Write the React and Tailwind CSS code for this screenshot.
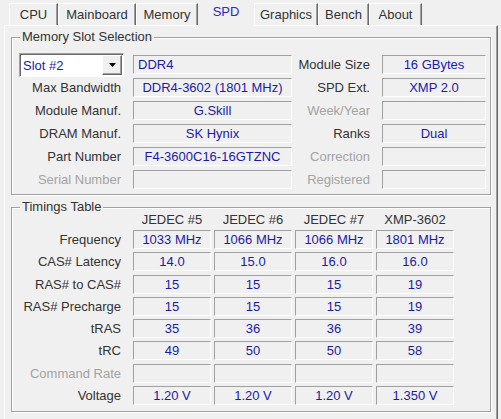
import React from "react";

const tabs = [
  { name: "CPU", w: "w-[49px]" },
  { name: "Mainboard", w: "w-[78px]" },
  { name: "Memory", w: "w-[62px]" },
  { name: "SPD", w: "w-[56px]", active: true },
  { name: "Graphics", w: "w-[64px]" },
  { name: "Bench", w: "w-[51px]" },
  { name: "About", w: "w-[53px]" },
];

const slotRows = [
  { label: "Max Bandwidth", value: "DDR4-3602 (1801 MHz)", right: "SPD Ext.", rightValue: "XMP 2.0" },
  { label: "Module Manuf.", value: "G.Skill", right: "Week/Year", rightOff: true },
  { label: "DRAM Manuf.", value: "SK Hynix", right: "Ranks", rightValue: "Dual" },
  { label: "Part Number", value: "F4-3600C16-16GTZNC", right: "Correction", rightOff: true },
  { label: "Serial Number", off: true, right: "Registered", rightOff: true },
];

const timingCols = ["JEDEC #5", "JEDEC #6", "JEDEC #7", "XMP-3602"];

const timings = [
  { label: "Frequency", values: ["1033 MHz", "1066 MHz", "1066 MHz", "1801 MHz"] },
  { label: "CAS# Latency", values: ["14.0", "15.0", "16.0", "16.0"] },
  { label: "RAS# to CAS#", values: ["15", "15", "15", "19"] },
  { label: "RAS# Precharge", values: ["15", "15", "15", "19"] },
  { label: "tRAS", values: ["35", "36", "36", "39"] },
  { label: "tRC", values: ["49", "50", "50", "58"] },
  { label: "Command Rate", values: ["", "", "", ""], off: true },
  { label: "Voltage", values: ["1.20 V", "1.20 V", "1.20 V", "1.350 V"] },
];

function Field({ children, width, left }) {
  return (
    <div
      className={`flex h-[19px] items-center border border-t-[#a0a0a0] border-l-[#a0a0a0] border-b-white border-r-white leading-none whitespace-nowrap text-[#1b1ba8] ${width} ${
        left ? "justify-start pl-[4px]" : "justify-center"
      }`}
    >
      {children}
    </div>
  );
}

function Label({ children, off, width }) {
  return (
    <div className={`text-right leading-none whitespace-nowrap ${width} ${off ? "text-[#a3a3a3]" : "text-[#333]"}`}>
      {children}
    </div>
  );
}

function GroupBox({ title, className, children }) {
  return (
    <div
      className={`relative ml-[6px] w-[480px] border border-[#a0a0a0] shadow-[inset_1px_1px_0_#fff,1px_1px_0_#fff] ${className}`}
    >
      <span className="absolute -top-[8px] left-[8px] bg-[#f0f0f0] px-[2px] leading-none text-[#333]">{title}</span>
      {children}
    </div>
  );
}

export default function App() {
  return (
    <div className="h-[419px] w-[501px] overflow-hidden bg-[#f0f0f0] font-['Liberation_Sans',Arial,sans-serif] text-[13px]">
      {/* tab strip */}
      <div className="flex h-[25px] items-end pl-[9px]">
        {tabs.map((t) =>
          t.active ? (
            <div
              key={t.name}
              className={`relative z-10 -mb-[1px] flex h-[26px] items-center justify-center bg-[#f0f0f0] pb-[2px] text-[#2a2ac0] ${t.w}`}
            >
              {t.name}
            </div>
          ) : (
            <div
              key={t.name}
              className={`flex h-[22px] items-center justify-center border-t border-l border-white border-r border-r-[#696969] shadow-[inset_-1px_0_0_#a0a0a0] pt-[1px] text-[#333] ${t.w}`}
            >
              {t.name}
            </div>
          )
        )}
      </div>

      {/* tab page */}
      <div className="ml-[4px] h-[400px] w-[494px] border-t border-l border-white border-r border-r-[#696969] shadow-[inset_-1px_0_0_#a0a0a0]">
        <GroupBox title="Memory Slot Selection" className="mt-[11px] h-[158px]">
          <div className="flex flex-col gap-[4px] pt-[17px]">
            <div className="flex h-[19px] items-center">
              {/* slot combo */}
              <div className="ml-[7px] flex h-[24px] w-[105px] items-center border border-t-[#a0a0a0] border-l-[#a0a0a0] border-b-white border-r-white bg-white shadow-[inset_1px_1px_0_#696969]">
                <span className="flex-1 pl-[3px] pt-[1px] leading-none text-[#1b1ba8]">Slot #2</span>
                <div className="mr-[1px] flex h-[20px] w-[20px] items-center justify-center border border-t-white border-l-white border-b-[#696969] border-r-[#696969] bg-[#f0f0f0] shadow-[inset_-1px_-1px_0_#a0a0a0]">
                  <svg width="7" height="4" viewBox="0 0 7 4">
                    <path d="M0 0h7L3.5 4z" fill="#000" />
                  </svg>
                </div>
              </div>
              <div className="ml-[9px]">
                <Field width="w-[159px]" left>
                  DDR4
                </Field>
              </div>
              <Label width="w-[78px]">Module Size</Label>
              <div className="ml-[12px]">
                <Field width="w-[104px]">16 GBytes</Field>
              </div>
            </div>
            {slotRows.map((r) => (
              <div key={r.label} className="flex h-[19px] items-center">
                <Label width="w-[109px]" off={r.off}>
                  {r.label}
                </Label>
                <div className="ml-[12px]">
                  <Field width="w-[159px]">{r.value}</Field>
                </div>
                <Label width="w-[78px]" off={r.rightOff}>
                  {r.right}
                </Label>
                <div className="ml-[12px]">
                  <Field width="w-[104px]">{r.rightValue}</Field>
                </div>
              </div>
            ))}
          </div>
        </GroupBox>

        <GroupBox title="Timings Table" className="mt-[12px] h-[205px]">
          <div className="pt-[2px]">
            <div className="flex h-[19px] items-center">
              <div className="w-[109px]" />
              <div className="ml-[12px] flex gap-[3px]">
                {timingCols.map((c) => (
                  <div key={c} className="w-[78px] text-center leading-none text-[#333]">
                    {c}
                  </div>
                ))}
              </div>
            </div>
            <div className="mt-[1px] flex flex-col gap-[3.3px]">
              {timings.map((r) => (
                <div key={r.label} className="flex h-[19px] items-center">
                  <Label width="w-[109px]" off={r.off}>
                    {r.label}
                  </Label>
                  <div className="ml-[12px] flex gap-[3px]">
                    {r.values.map((v, i) => (
                      <Field key={i} width="w-[78px]">
                        {v}
                      </Field>
                    ))}
                  </div>
                </div>
              ))}
            </div>
          </div>
        </GroupBox>
      </div>
    </div>
  );
}
